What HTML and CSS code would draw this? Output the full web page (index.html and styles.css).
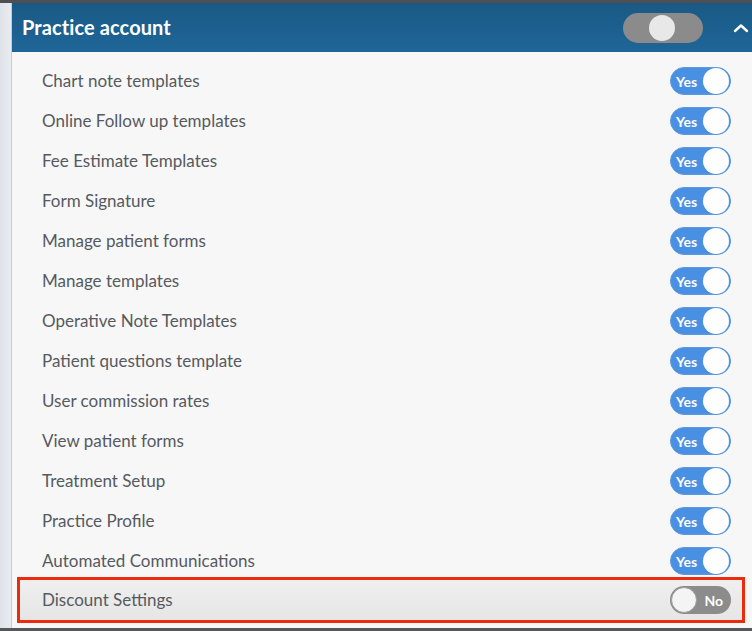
FILE: index.html
```html
<!DOCTYPE html>
<html>
<head>
<meta charset="utf-8">
<link rel="stylesheet" href="styles.css">
</head>
<body>
<div class="top-strip"></div>
<div class="frame">
  <div class="gutter"></div>
  <div class="panel">
    <div class="header">
      <span class="title">Practice account</span>
      <span class="head-toggle"><span class="head-knob"></span></span>
      <svg class="chevron" width="16" height="10" viewBox="0 0 16 10"><polyline points="2,8 8,2.5 14,8" fill="none" stroke="#fff" stroke-width="2.4" stroke-linecap="round" stroke-linejoin="round"/></svg>
    </div>
    <div class="list">
      <div class="row"><span class="label">Chart note templates</span><span class="toggle on"><span class="txt">Yes</span><span class="knob"></span></span></div>
      <div class="row"><span class="label">Online Follow up templates</span><span class="toggle on"><span class="txt">Yes</span><span class="knob"></span></span></div>
      <div class="row"><span class="label">Fee Estimate Templates</span><span class="toggle on"><span class="txt">Yes</span><span class="knob"></span></span></div>
      <div class="row"><span class="label">Form Signature</span><span class="toggle on"><span class="txt">Yes</span><span class="knob"></span></span></div>
      <div class="row"><span class="label">Manage patient forms</span><span class="toggle on"><span class="txt">Yes</span><span class="knob"></span></span></div>
      <div class="row"><span class="label">Manage templates</span><span class="toggle on"><span class="txt">Yes</span><span class="knob"></span></span></div>
      <div class="row"><span class="label">Operative Note Templates</span><span class="toggle on"><span class="txt">Yes</span><span class="knob"></span></span></div>
      <div class="row"><span class="label">Patient questions template</span><span class="toggle on"><span class="txt">Yes</span><span class="knob"></span></span></div>
      <div class="row"><span class="label">User commission rates</span><span class="toggle on"><span class="txt">Yes</span><span class="knob"></span></span></div>
      <div class="row"><span class="label">View patient forms</span><span class="toggle on"><span class="txt">Yes</span><span class="knob"></span></span></div>
      <div class="row"><span class="label">Treatment Setup</span><span class="toggle on"><span class="txt">Yes</span><span class="knob"></span></span></div>
      <div class="row"><span class="label">Practice Profile</span><span class="toggle on"><span class="txt">Yes</span><span class="knob"></span></span></div>
      <div class="row"><span class="label">Automated Communications</span><span class="toggle on"><span class="txt">Yes</span><span class="knob"></span></span></div>
      <div class="row highlighted"><span class="label">Discount Settings</span><span class="toggle off"><span class="knob"></span><span class="txt">No</span></span></div>
    </div>
  </div>
</div>
<div class="bottom-strip"></div>
</body>
</html>
```
FILE: styles.css
```css
html, body {
  margin: 0;
  padding: 0;
}
body {
  width: 752px;
  height: 631px;
  overflow: hidden;
  background: #e4e7eb;
  font-family: "Lato", "Liberation Sans", sans-serif;
}
.top-strip {
  height: 3px;
  background: #4d4f52;
}
.bottom-strip {
  height: 3px;
  background: #55575a;
}
.frame {
  display: flex;
  height: 625px;
}
.gutter {
  width: 11px;
  background: linear-gradient(to right, #dfe3e8, #e8ebef);
}
.panel {
  flex: 1;
  border-left: 1px solid #c8ccd1;
  background: #f7f7f7;
  display: flex;
  flex-direction: column;
}
.header {
  height: 49px;
  background: linear-gradient(to bottom, #1a5985, #1e6698);
  display: flex;
  align-items: center;
  padding-left: 10px;
  padding-right: 3px;
}
.title {
  color: #fff;
  font-weight: 700;
  font-size: 20px;
  flex: 1;
  letter-spacing: 0.1px;
  margin-top: -1px;
}
.head-toggle {
  width: 80px;
  height: 30px;
  border-radius: 15px;
  background: #8b8b8b;
  display: flex;
  align-items: center;
  margin-right: 30px;
}
.head-knob {
  width: 26px;
  height: 26px;
  border-radius: 50%;
  background: #e8e8e8;
  margin-left: 26px;
}
.chevron {
  display: block;
}
.list {
  padding-top: 9px;
}
.row {
  height: 40px;
  display: flex;
  align-items: center;
  justify-content: space-between;
  padding-left: 30px;
  padding-right: 21px;
}
.label {
  font-size: 17px;
  color: #565a5f;
  margin-top: -1px;
}
.toggle {
  width: 61px;
  height: 28px;
  border-radius: 14px;
  display: flex;
  align-items: center;
  box-sizing: border-box;
}
.toggle.on {
  background: #4a90e2;
  border: 1px solid #5d9ae4;
  padding-left: 5px;
  padding-right: 1px;
  justify-content: space-between;
}
.toggle .knob {
  width: 26px;
  height: 26px;
  border-radius: 50%;
  background: #fff;
  box-sizing: border-box;
}
.toggle .txt {
  color: #fff;
  font-weight: 700;
  font-size: 14px;
}
.toggle.off {
  background: #8c8c8c;
  padding-left: 1px;
  padding-right: 8px;
  justify-content: space-between;
}
.toggle.off .knob {
  border: 1px solid #9a9a9a;
  background: #f4f4f4;
}
.row.highlighted {
  position: relative;
  margin-top: -4px;
  margin-left: 5px;
  margin-right: 7px;
  height: 46px;
  box-sizing: border-box;
  border: 3px solid #ec2a0c;
  background: linear-gradient(to bottom, #efefef, #e6e6e6);
  padding-left: 22px;
  padding-right: 11px;
}
```
